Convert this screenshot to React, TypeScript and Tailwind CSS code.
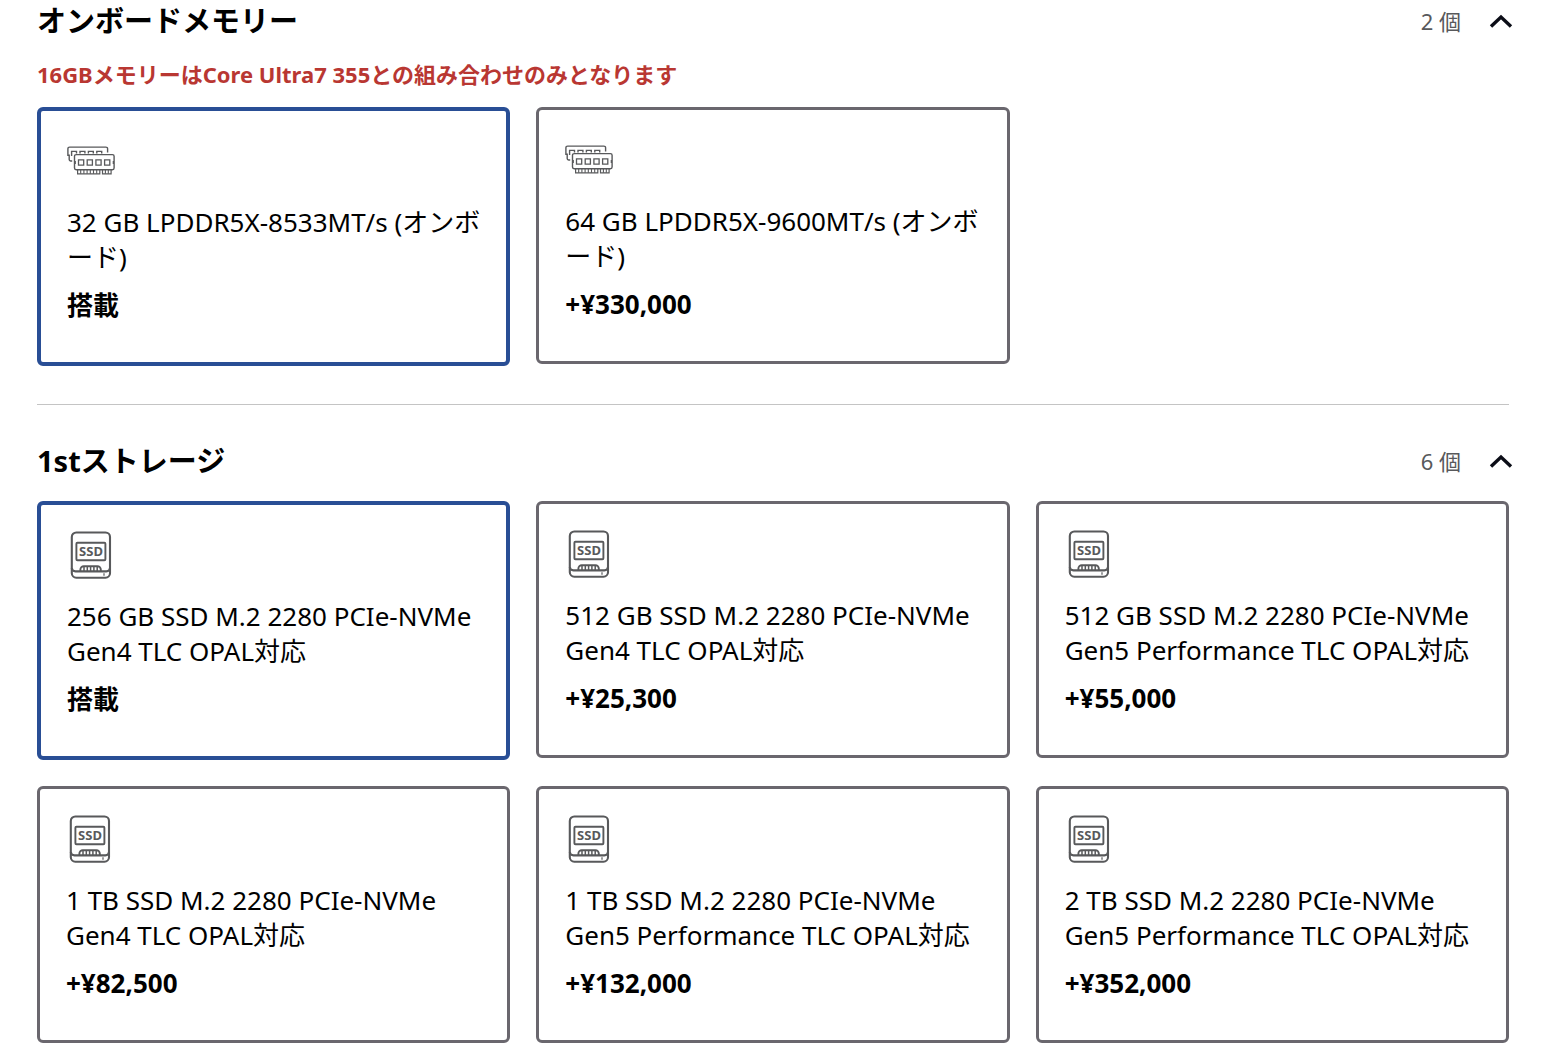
import { useState } from 'react'

type Option = {
  id: string
  label: string
  price: string
}

type Group = {
  id: string
  title: string
  note?: string
  icon: 'memory' | 'ssd'
  options: Option[]
}

const groups: Group[] = [
  {
    id: 'memory',
    title: 'オンボードメモリー',
    note: '16GBメモリーはCore Ultra7 355との組み合わせのみとなります',
    icon: 'memory',
    options: [
      { id: 'm32', label: '32 GB LPDDR5X-8533MT/s (オンボード)', price: '搭載' },
      { id: 'm64', label: '64 GB LPDDR5X-9600MT/s (オンボード)', price: '+¥330,000' },
    ],
  },
  {
    id: 'storage',
    title: '1stストレージ',
    icon: 'ssd',
    options: [
      { id: 's256', label: '256 GB SSD M.2 2280 PCIe-NVMe Gen4 TLC OPAL対応', price: '搭載' },
      { id: 's512', label: '512 GB SSD M.2 2280 PCIe-NVMe Gen4 TLC OPAL対応', price: '+¥25,300' },
      { id: 's512p', label: '512 GB SSD M.2 2280 PCIe-NVMe Gen5 Performance TLC OPAL対応', price: '+¥55,000' },
      { id: 's1t', label: '1 TB SSD M.2 2280 PCIe-NVMe Gen4 TLC OPAL対応', price: '+¥82,500' },
      { id: 's1tp', label: '1 TB SSD M.2 2280 PCIe-NVMe Gen5 Performance TLC OPAL対応', price: '+¥132,000' },
      { id: 's2tp', label: '2 TB SSD M.2 2280 PCIe-NVMe Gen5 Performance TLC OPAL対応', price: '+¥352,000' },
    ],
  },
]

function MemoryIcon() {
  return (
    <svg className="size-12" viewBox="0 0 48 48" fill="none" stroke="#58595b" strokeWidth="1.4" aria-hidden="true">
      {/* back module */}
      <path d="M40.6 15.4v-3.6a1.7 1.7 0 0 0-1.7-1.7H2.6A1.7 1.7 0 0 0 .9 11.8v6.4h1.3v4.4a1.4 1.4 0 0 0 1.4 1.4h1.6" />
      <path d="M4.6 19v-4.6h4.9v2M13 16.4v-2h4.9v2M21.4 16.4v-2h4.9v2M29.8 16.4v-2h4.9v2" />
      {/* front module */}
      <path d="M9.2 17.6h36.2a1.7 1.7 0 0 1 1.7 1.7v5.4h-.7v1.6h.7v4.8a1.7 1.7 0 0 1-1.7 1.7H9.2a1.7 1.7 0 0 1-1.7-1.7v-4.8h.7v-1.6h-.7v-5.4a1.7 1.7 0 0 1 1.7-1.7z" />
      <path d="M11.5 22.9h5.2v5.3h-5.2zM20.2 22.9h5.2v5.3h-5.2zM28.9 22.9h5.2v5.3h-5.2zM37.6 22.9h5.2v5.3h-5.2z" strokeWidth="1.3" />
      <path d="M10.6 33v3.8h22.2V33M35.5 33v3.8h8.6V33" strokeWidth="1.2" />
      <path d="M13.7 33v3.8M16.9 33v3.8M20.1 33v3.8M23.3 33v3.8M26.5 33v3.8M29.7 33v3.8M38.4 33v3.8M41.3 33v3.8" strokeWidth="1.1" />
    </svg>
  )
}

function SsdIcon() {
  return (
    <svg className="size-12" viewBox="0 0 48 48" fill="none" stroke="#58595b" strokeWidth="2.1" aria-hidden="true">
      <rect x="4.8" y="1.5" width="38.2" height="45.2" rx="4.5" />
      <path d="M4.8 37q.4 3.4 3.6 3.4h31q3.2 0 3.6-3.4" />
      <rect x="9.4" y="11.8" width="29" height="17.4" rx="1" strokeWidth="1.9" />
      <path d="M13.4 40.4v-1.8a3.4 3.4 0 0 1 3.4-3.4h13.6a3.4 3.4 0 0 1 3.4 3.4v1.8" strokeWidth="1.9" />
      <path d="M17 35.5v5M20.3 35.5v5M23.6 35.5v5M26.9 35.5v5M30.2 35.5v5" strokeWidth="1.5" />
      <path d="M37 42.3v2.4" strokeWidth="1.2" />
      <text x="24" y="25.2" textAnchor="middle" fill="#58595b" stroke="none" className="text-[13px] font-bold">
        SSD
      </text>
    </svg>
  )
}

function OptionCard({ option, group, selected, onSelect }: {
  option: Option
  group: Group
  selected: boolean
  onSelect: () => void
}) {
  return (
    <label
      className={`relative block cursor-pointer rounded-md bg-white pt-[26px] pr-5 pb-[39px] pl-[26px] ${
        selected ? 'border-4 border-[#294e95]' : 'border-3 border-[#6a676e]'
      }`}
    >
      <input type="radio" name={group.id} checked={selected} onChange={onSelect} className="sr-only" />
      {group.icon === 'memory' ? <MemoryIcon /> : <SsdIcon />}
      <span className="mt-5 block text-[26px] leading-[35px]">{option.label}</span>
      <span className="mt-3 block text-[26px] leading-[36px] font-bold">{option.price}</span>
    </label>
  )
}

function OptionGroup({ group }: { group: Group }) {
  const [open, setOpen] = useState(true)
  const [selected, setSelected] = useState(group.options[0].id)

  return (
    <section className="flex flex-col gap-5">
      <div className="flex h-10 items-center justify-between">
        <h2 className="text-[29px] leading-10 font-bold">{group.title}</h2>
        <button
          type="button"
          aria-expanded={open}
          onClick={() => setOpen(!open)}
          className="-mr-1 flex cursor-pointer items-center gap-7 text-[22px] leading-8 text-[#58595b]"
        >
          <span>{group.options.length} 個</span>
          <svg className={`h-4 w-6 ${open ? '' : 'rotate-180'}`} viewBox="0 0 24 16" fill="none" stroke="#0b0d17" strokeWidth="3.4" aria-hidden="true">
            <path d="M2 13.6 12 4l10 9.6" />
          </svg>
        </button>
      </div>
      {group.note && <p className="text-[22px] leading-[26px] font-bold text-[#b93732]">{group.note}</p>}
      {open && (
        <div className="grid grid-cols-3 items-start gap-[26px]">
          {group.options.map(option => (
            <OptionCard
              key={option.id}
              option={option}
              group={group}
              selected={option.id === selected}
              onSelect={() => setSelected(option.id)}
            />
          ))}
        </div>
      )}
    </section>
  )
}

export default function App() {
  return (
    <main className="bg-white pt-px pr-8 pb-5 pl-[37px] font-['Noto_Sans','Noto_Sans_CJK_JP',sans-serif] text-black" lang="ja">
      <OptionGroup group={groups[0]} />
      <hr className="mt-[38px] mb-9 border-[#c4c4c4]" />
      <OptionGroup group={groups[1]} />
    </main>
  )
}
